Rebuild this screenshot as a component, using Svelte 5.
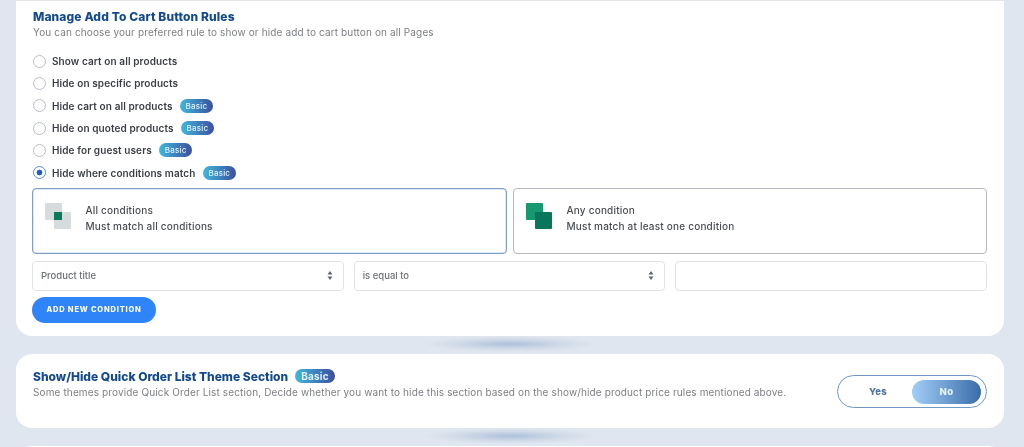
<script>
  const rules = [
    { label: 'Show cart on all products' },
    { label: 'Hide on specific products' },
    { label: 'Hide cart on all products', basic: true },
    { label: 'Hide on quoted products', basic: true },
    { label: 'Hide for guest users', basic: true },
    { label: 'Hide where conditions match', basic: true, checked: true }
  ];
</script>

<div class="page">
  <section class="card first">
    <h2>Manage Add To Cart Button Rules</h2>
    <p class="sub">You can choose your preferred rule to show or hide add to cart button on all Pages</p>
    <div class="rules">
      {#each rules as r}
        <label class="rule">
          <span class="radio" class:on={r.checked}></span>
          <span class="rule-text">{r.label}</span>
          {#if r.basic}<span class="badge">Basic</span>{/if}
        </label>
      {/each}
    </div>
    <div class="choices">
      <div class="choice active">
        <svg class="ico" width="27" height="27" viewBox="0 0 27 27">
          <rect x="0" y="0" width="17" height="17" rx="1" fill="#d6dbde" />
          <rect x="9" y="9" width="17" height="17" rx="1" fill="#d6dbde" />
          <rect x="9" y="9" width="8" height="8" fill="#0b7a5c" />
        </svg>
        <div class="choice-text"><div>All conditions</div><div>Must match all conditions</div></div>
      </div>
      <div class="choice">
        <svg class="ico" width="27" height="27" viewBox="0 0 27 27">
          <rect x="0" y="0" width="17" height="17" rx="1" fill="#17996f" />
          <rect x="9" y="9" width="17" height="17" rx="1" fill="#08765a" />
        </svg>
        <div class="choice-text"><div>Any condition</div><div>Must match at least one condition</div></div>
      </div>
    </div>
    <div class="fields">
      <div class="field"><span>Product title</span><svg width="6" height="9" viewBox="0 0 6 9"><path d="M3 0l2.5 3.5h-5zM3 9L.5 5.5h5z" fill="#5c6670"/></svg></div>
      <div class="field"><span>is equal to</span><svg width="6" height="9" viewBox="0 0 6 9"><path d="M3 0l2.5 3.5h-5zM3 9L.5 5.5h5z" fill="#5c6670"/></svg></div>
      <div class="field"></div>
    </div>
    <button class="add">ADD NEW CONDITION</button>
    <div class="glow"></div>
  </section>

  <section class="card second">
    <div class="second-text">
      <h2>Show/Hide Quick Order List Theme Section <span class="badge big">Basic</span></h2>
      <p class="sub">Some themes provide Quick Order List section, Decide whether you want to hide this section based on the show/hide product price rules mentioned above.</p>
    </div>
    <div class="toggle"><span class="yes">Yes</span><span class="no">No</span></div>
    <div class="glow"></div>
  </section>

  <section class="card third"></section>
</div>

<style>
  :global(body) { margin: 0; background: #e0e6ef; overflow: hidden; }
  .page {
    height: 447px; overflow: hidden; box-sizing: border-box;
    padding: 0 20px 0 16px;
    font-family: "Inter", "Liberation Sans", sans-serif;
    filter: blur(0.35px);
    background: #e0e6ef;
  }
  .card { background: #fff; border-radius: 16px; position: relative; padding: 0 17px 0 16px; box-sizing: border-box; }
  .first { height: 336px; border-radius: 0 0 16px 16px; padding-top: 9px; border-top: 1px solid #e2e4e7; }
  h2 { margin: 0 0 0 1px; font-size: 12px; line-height: 14px; font-weight: 800; color: #134a8e; letter-spacing: .12px; white-space: nowrap; }
  .sub { margin: 1px 0 0 1px; font-size: 10px; line-height: 15px; color: #7c7f84; letter-spacing: .13px; white-space: nowrap; }
  .rules { margin: 10px 0 0 1px; display: flex; flex-direction: column; }
  .rule { height: 22.3px; display: flex; align-items: center; font-size: 10px; font-weight: 600; color: #3b3f45; letter-spacing: .1px; }
  .radio { width: 13px; height: 13px; border-radius: 50%; border: 1px solid #b9bdc6; box-sizing: border-box; margin-right: 6px; background: #fff; flex: none; }
  .radio.on { border-color: #5b8fd6; background: radial-gradient(circle, #1f5fc4 0 2.6px, #fff 3.2px); }
  .badge {
    margin-left: 7.5px; padding: 0 5.5px; height: 14px; line-height: 14px; border-radius: 7px;
    font-size: 8px; font-weight: 500; color: #dff1fb; letter-spacing: .2px;
    background: linear-gradient(90deg, #3fb8dc, #3d4f9f);
  }
  .badge.big { display: inline-block; margin-left: 4px; height: 14px; line-height: 14px; padding: 0 6.5px; font-size: 10px; font-weight: 700; border-radius: 8px; vertical-align: 1px; }
  .choices { display: flex; gap: 6px; margin-top: 4px; }
  .choice { flex: 1; height: 66px; border: 1px solid #b5b9bf; border-radius: 4px; box-sizing: border-box; display: flex; align-items: flex-start; padding: 14px 0 0 12px; }
  .choice.active { flex: none; width: 475px; border-color: #7f9fc9; box-shadow: inset 0 0 0 .25px #7f9fc9; }
  .ico { flex: none; margin-right: 14px; }
  .choice-text { font-size: 10px; line-height: 16px; font-weight: 500; color: #4a4d52; letter-spacing: .2px; margin: -1px 0 0 -.5px; }
  .fields { display: flex; gap: 10px; margin-top: 7px; }
  .field { flex: 1; height: 30px; border: 1px solid #dfe2e6; border-radius: 4px; box-sizing: border-box; display: flex; align-items: center; justify-content: space-between; padding: 0 10px 0 8px; font-size: 9.5px; font-weight: 500; color: #6d7075; }
  .add { display: block; margin-top: 6px; width: 124px; height: 26px; padding: 0; border: 0; border-radius: 13px; background: #2f84f7; color: #fff; font-family: inherit; font-size: 7.5px; font-weight: 800; letter-spacing: .8px; }
  .glow { position: absolute; left: 50%; margin-left: -87px; bottom: -16px; width: 175px; height: 16px; background: radial-gradient(closest-side, #adc1da, #b9c9dd66 60%, #e0e6ef00); }
  .second { height: 74px; margin-top: 18px; display: flex; justify-content: space-between; padding-top: 15px; }
  .second h2 { line-height: 16px; letter-spacing: 0; }
  .second .sub { margin-top: 0; }
  .toggle { width: 150px; height: 33px; margin-top: 6px; border: 1px solid #6f97c8; border-radius: 17px; box-sizing: border-box; display: flex; align-items: center; padding: 0 5px 0 6px; font-size: 9.5px; font-weight: 800; letter-spacing: .35px; flex: none; }
  .yes { flex: 1; text-align: center; color: #4f74a4; }
  .no { width: 69px; height: 24px; line-height: 24px; text-align: center; border-radius: 12px; color: #eaf3fc; background: linear-gradient(90deg, #a2cff8, #3a6ca8); }
  .third { height: 40px; margin-top: 18px; }
</style>
